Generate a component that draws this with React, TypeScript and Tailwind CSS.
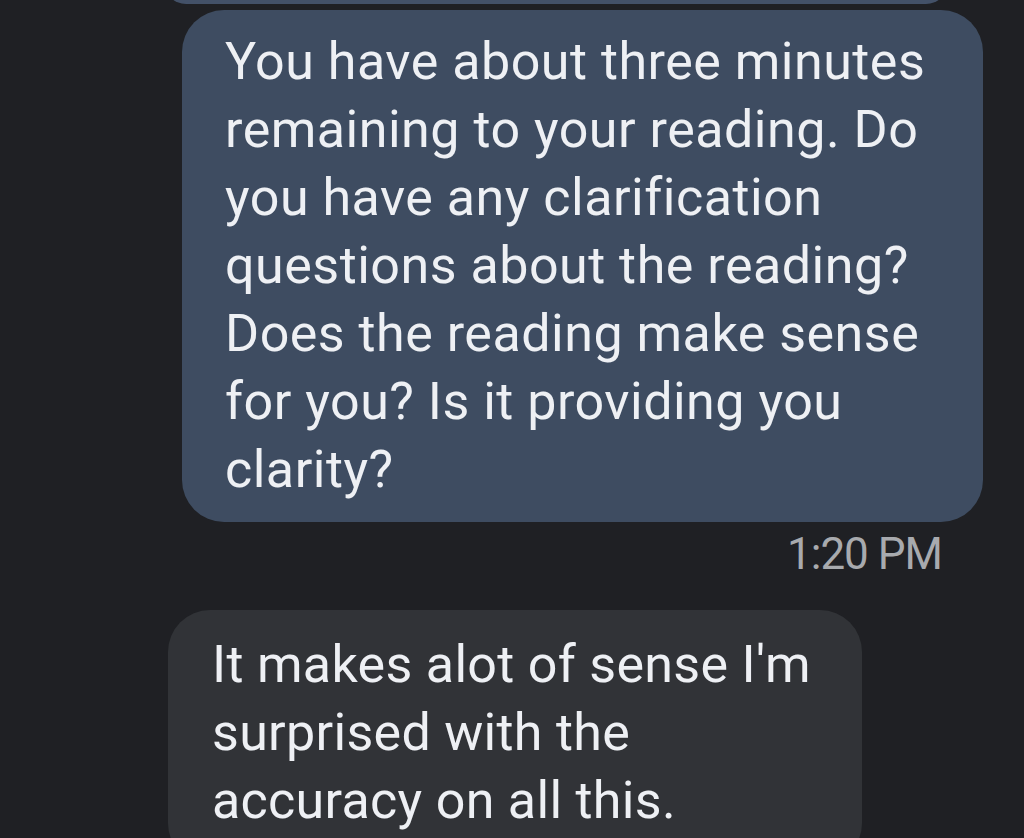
export default function App() {
  const font = { fontFamily: 'Roboto, "Noto Sans", sans-serif' };
  return (
    <div className="w-[1024px] h-[838px] overflow-hidden bg-[#1f2024] flex flex-col" style={font}>
      <div className="ml-[164px] w-[784px] h-[44px] -mt-[40px] rounded-[40px] bg-[#435168] shrink-0" />
      <div className="mt-[6px] ml-[182px] w-[801px] rounded-[42px] bg-[#3e4c61] pl-[43px] py-[18px] shrink-0">
        <p className="text-[52px] leading-[68px] text-[#eef0f4] whitespace-nowrap tracking-[0.5px]">
          You have about three minutes<br />
          remaining to your reading. Do<br />
          you have any clarification<br />
          questions about the reading?<br />
          Does the reading make sense<br />
          for you? Is it providing you<br />
          clarity?
        </p>
      </div>
      <div className="mt-[12px] ml-[787px] text-[44px] leading-[40px] text-[#a8aaae] whitespace-nowrap tracking-[-1px] shrink-0">
        1:20 PM
      </div>
      <div className="mt-[36px] ml-[168px] w-[694px] rounded-[42px] bg-[#313337] pl-[44px] pt-[21px] pb-[30px] shrink-0">
        <p className="text-[52px] leading-[68px] text-[#eef0f4] whitespace-nowrap tracking-[0.3px]">
          It makes alot of sense I'm<br />
          surprised with the<br />
          accuracy on all this.
        </p>
      </div>
    </div>
  );
}
